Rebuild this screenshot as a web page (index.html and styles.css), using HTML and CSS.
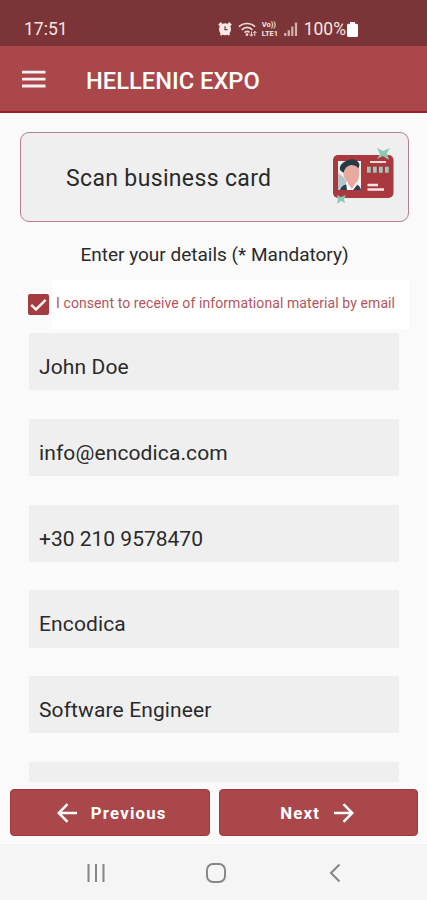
FILE: index.html
```
<!DOCTYPE html>
<html lang="en">

<head>
  <meta charset="utf-8">
  <meta name="viewport" content="width=device-width, initial-scale=1">
  <title>HELLENIC EXPO</title>
  <link rel="stylesheet" href="styles.css">
</head>

<body>
  <div class="statusbar">
    <span class="clock">17:51</span>
    <div class="status-icons">
      <!-- alarm -->
      <svg width="14" height="14" viewBox="0 0 14 14">
        <path d="M1 3.5 3.7 1M13 3.5 10.3 1M2.7 13 4 11.5M11.3 13 10 11.5" stroke="#f7e9e6" stroke-width="2.4"/>
        <circle cx="7" cy="7.3" r="6" fill="#f7e9e6"/>
        <path d="M7 4.2V7.7H9.5" fill="none" stroke="#7b3539" stroke-width="1.2"/>
      </svg>
      <!-- wifi -->
      <svg class="wifi" width="19" height="15" viewBox="0 0 19 15">
        <path d="M1 4.8C5 .4 13 .4 17 4.8M3.8 7.8C7 4.6 11.4 4.6 14.4 7.8M6.4 10.5C8 9 10 9 11.6 10.3" fill="none" stroke="#ecd9d6" stroke-width="1.7"/>
        <circle cx="9" cy="12.7" r="1.4" fill="#ecd9d6"/>
        <path d="M13.5 9.5V14M11.7 12.2 13.5 14.2 15.2 12.2M16.8 14V9.5M15.2 11 16.8 9.2 18.5 11" fill="none" stroke="#ecd9d6"/>
      </svg>
      <span class="volte"><span>Vo))</span><span>LTE1</span></span>
      <!-- signal -->
      <svg class="signal" width="14" height="14" viewBox="0 0 14 14">
        <path d="M1.3 14V11M4.8 14V8.3M8.3 14V4.5M12 14V.5" stroke="#d3b3b2" stroke-width="2.2"/>
      </svg>
      <span class="percent">100%</span>
      <svg class="battery" width="11" height="15" viewBox="0 0 11 15">
        <path d="M3 0H8V1.8H9.5Q11 1.8 11 3.3V13.5Q11 15 9.5 15H1.5Q0 15 0 13.5V3.3Q0 1.8 1.5 1.8H3Z" fill="#fff"/>
      </svg>
    </div>
  </div>

  <div class="appbar">
    <svg width="24" height="18" viewBox="0 0 24 18">
      <path d="M0 2.2H23.5M0 9.2H23.5M0 16H23.5" stroke="#fbeeee" stroke-width="2.8"/>
    </svg>
    <h1 class="app-title">HELLENIC EXPO</h1>
  </div>

  <div class="content">
    <div class="scan-card">
      <span class="scan-text">Scan business card</span>
      <svg class="scan-icon" width="64" height="60" viewBox="0 0 64 60">
        <rect x="2" y="8" width="60.5" height="43" rx="5" fill="#a9393f"/>
        <rect x="7" y="14" width="23" height="29" fill="#f4f1f1"/>
        <path d="M7 26Q12 28 16 36L17 43H7Z" fill="#b5c5cc"/>
        <path d="M9 43Q11 37 18 37H24Q29 38 30 43Z" fill="#27404b"/>
        <path d="M15 36 18 34H24L26 38 22 43H16Z" fill="#fff"/>
        <path d="M12.5 20Q20 14 28 20V29Q27 37 21 38Q14 35 12.5 28Z" fill="#e8a99f"/>
        <path d="M17 33V37L21 42 24 37V33Z" fill="#e8a99f"/>
        <path d="M9 23Q8 18 13 15Q19 11 25 13L28 16Q29 20 27 21Q25 18 20 18Q14 19 12.5 26Z" fill="#253a45"/>
        <path d="M39 15H55" stroke="#f0d9d9" stroke-width="2"/>
        <path d="M36 22.7H39.7M42 22.7H45.7M48 22.7H51.7M54 22.7H57.7" stroke="#9cc9b9" stroke-width="6"/>
        <path d="M36.5 38H47M36.5 42.5H53" stroke="#f5e4e4" stroke-width="2.5"/>
        <path d="M46 1 52 4 59 1 56 6 58 13 52 9 46 12 49 7Z" fill="#8fc9b3"/>
        <path d="M6 48 10 50 15 48 13 52 14 56 10 54 6 57 7 52Z" fill="#8fc9b3"/>
      </svg>
    </div>

    <p class="hint">Enter your details (* Mandatory)</p>

    <div class="consent">
      <span class="checkbox">
        <svg width="21" height="21" viewBox="0 0 21 21">
          <path d="M3.2 10.8 8 15.4 17.7 5.8" fill="none" stroke="#fff3ec" stroke-width="2.5"/>
        </svg>
      </span>
      <label class="consent-text">I consent to receive of informational material by email</label>
    </div>

    <div class="fields">
      <div class="field name">John Doe</div>
      <div class="field email">info@encodica.com</div>
      <div class="field phone">+30 210 9578470</div>
      <div class="field company">Encodica</div>
      <div class="field job">Software Engineer</div>
      <div class="field"></div>
    </div>
  </div>

  <div class="actions">
    <div class="btn prev">
      <svg width="20" height="20" viewBox="0 0 20 20">
        <path d="M20 10H2M10.5 1.2 1.7 10 10.5 18.8" fill="none" stroke="#fff" stroke-width="2.5"/>
      </svg>
      <span>Previous</span>
    </div>
    <div class="btn next">
      <span>Next</span>
      <svg width="20" height="20" viewBox="0 0 20 20">
        <path d="M0 10H18M9.5 1.2 18.3 10 9.5 18.8" fill="none" stroke="#fff" stroke-width="2.5"/>
      </svg>
    </div>
  </div>

  <div class="navbar">
    <svg width="20" height="20" viewBox="0 0 20 20">
      <path d="M2.5 1V19M10 1V19M17.5 1V19" stroke="#858585" stroke-width="2"/>
    </svg>
    <svg width="20" height="20" viewBox="0 0 20 20">
      <rect x="1" y="1" width="18" height="18" rx="6" fill="none" stroke="#858585" stroke-width="1.9"/>
    </svg>
    <svg width="20" height="20" viewBox="0 0 20 20">
      <path d="M14.5 1.5 6 10 14.5 18.5" fill="none" stroke="#858585" stroke-width="2"/>
    </svg>
  </div>
</body>

</html>
```
FILE: styles.css
```
:root {
  --red: #a9474b;
  --darkred: #7b3539;
  --grey: #efefef;
}

* {
  box-sizing: border-box;
}

body {
  margin: 0;
  height: 900px;
  display: flex;
  flex-direction: column;
  overflow: hidden;
  background-color: #fafafa;
  color: #2a2a2a;
  font-family: Roboto, "Liberation Sans", sans-serif;
}

svg {
  display: block;
  flex: none;
}

.statusbar {
  height: 46px;
  padding: 12px 69px 0 24px;
  display: flex;
  align-items: center;
  justify-content: space-between;
  background-color: var(--darkred);
  color: #f7e4df;
  font-size: 17.5px;
}

.status-icons {
  display: flex;
  align-items: center;
}

.wifi {
  margin-left: 6px;
}

.volte {
  width: 18px;
  margin-left: 5px;
  display: flex;
  flex-direction: column;
  font-size: 7.5px;
  font-weight: 700;
  line-height: 9px;
}

.signal {
  margin-left: 4px;
}

.percent {
  margin-left: 6px;
}

.battery {
  margin-left: 1px;
}

.appbar {
  height: 67px;
  padding: 0 22px;
  display: flex;
  align-items: center;
  gap: 40px;
  background-color: var(--red);
  border-bottom: 2px solid #a01f25;
}

.app-title {
  margin: 4px 0 0;
  color: #fff;
  font-size: 23.7px;
  font-weight: 500;
}

.content {
  height: 669px;
  padding: 19px 18px 0 20px;
  overflow: hidden;
}

.scan-card {
  height: 90px;
  padding: 0 13px 0 45px;
  display: flex;
  align-items: center;
  justify-content: space-between;
  background-color: var(--grey);
  border: 1px solid #b77e87;
  border-radius: 9px;
}

.scan-text {
  margin-top: 2px;
  font-size: 23px;
  letter-spacing: 0.35px;
}

.hint {
  margin: 20px 0 0;
  text-align: center;
  font-size: 19px;
  line-height: 26px;
}

.consent {
  height: 49px;
  margin-top: 12px;
  padding-left: 8px;
  display: flex;
  align-items: center;
}

.checkbox {
  width: 21px;
  height: 21px;
  background-color: #a33b41;
  border-radius: 2px;
}

.consent-text {
  height: 49px;
  flex: 1;
  margin-left: 3px;
  padding-left: 4px;
  background-color: #fff;
  color: #b4535c;
  font-size: 14px;
  line-height: 46px;
  letter-spacing: 0.09px;
  white-space: nowrap;
}

.fields {
  margin-top: 4px;
  padding: 0 10px 0 9px;
  display: grid;
  grid-auto-rows: 57.3px;
  gap: 28.5px;
}

.field {
  padding: 11px 10px 0;
  background-color: var(--grey);
  font-size: 21px;
  line-height: 46px;
  letter-spacing: 0.12px;
}

.phone {
  letter-spacing: 0;
}

.actions {
  height: 62px;
  padding: 7px 9px 8px 10px;
  display: grid;
  grid-template-columns: 1fr 1fr;
  gap: 9px;
}

.btn {
  display: flex;
  align-items: center;
  justify-content: center;
  gap: 14px;
  background-color: var(--red);
  border: 1px solid #a1383e;
  border-radius: 4px;
  color: #fff;
  font-size: 16.8px;
  font-weight: 700;
  letter-spacing: 1.2px;
}

.prev {
  padding-left: 4px;
}

.next {
  padding-right: 2px;
}

.navbar {
  height: 56px;
  padding: 2px 82px 0 86px;
  display: flex;
  align-items: center;
  justify-content: space-between;
  background-color: #f5f5f5;
}
```
